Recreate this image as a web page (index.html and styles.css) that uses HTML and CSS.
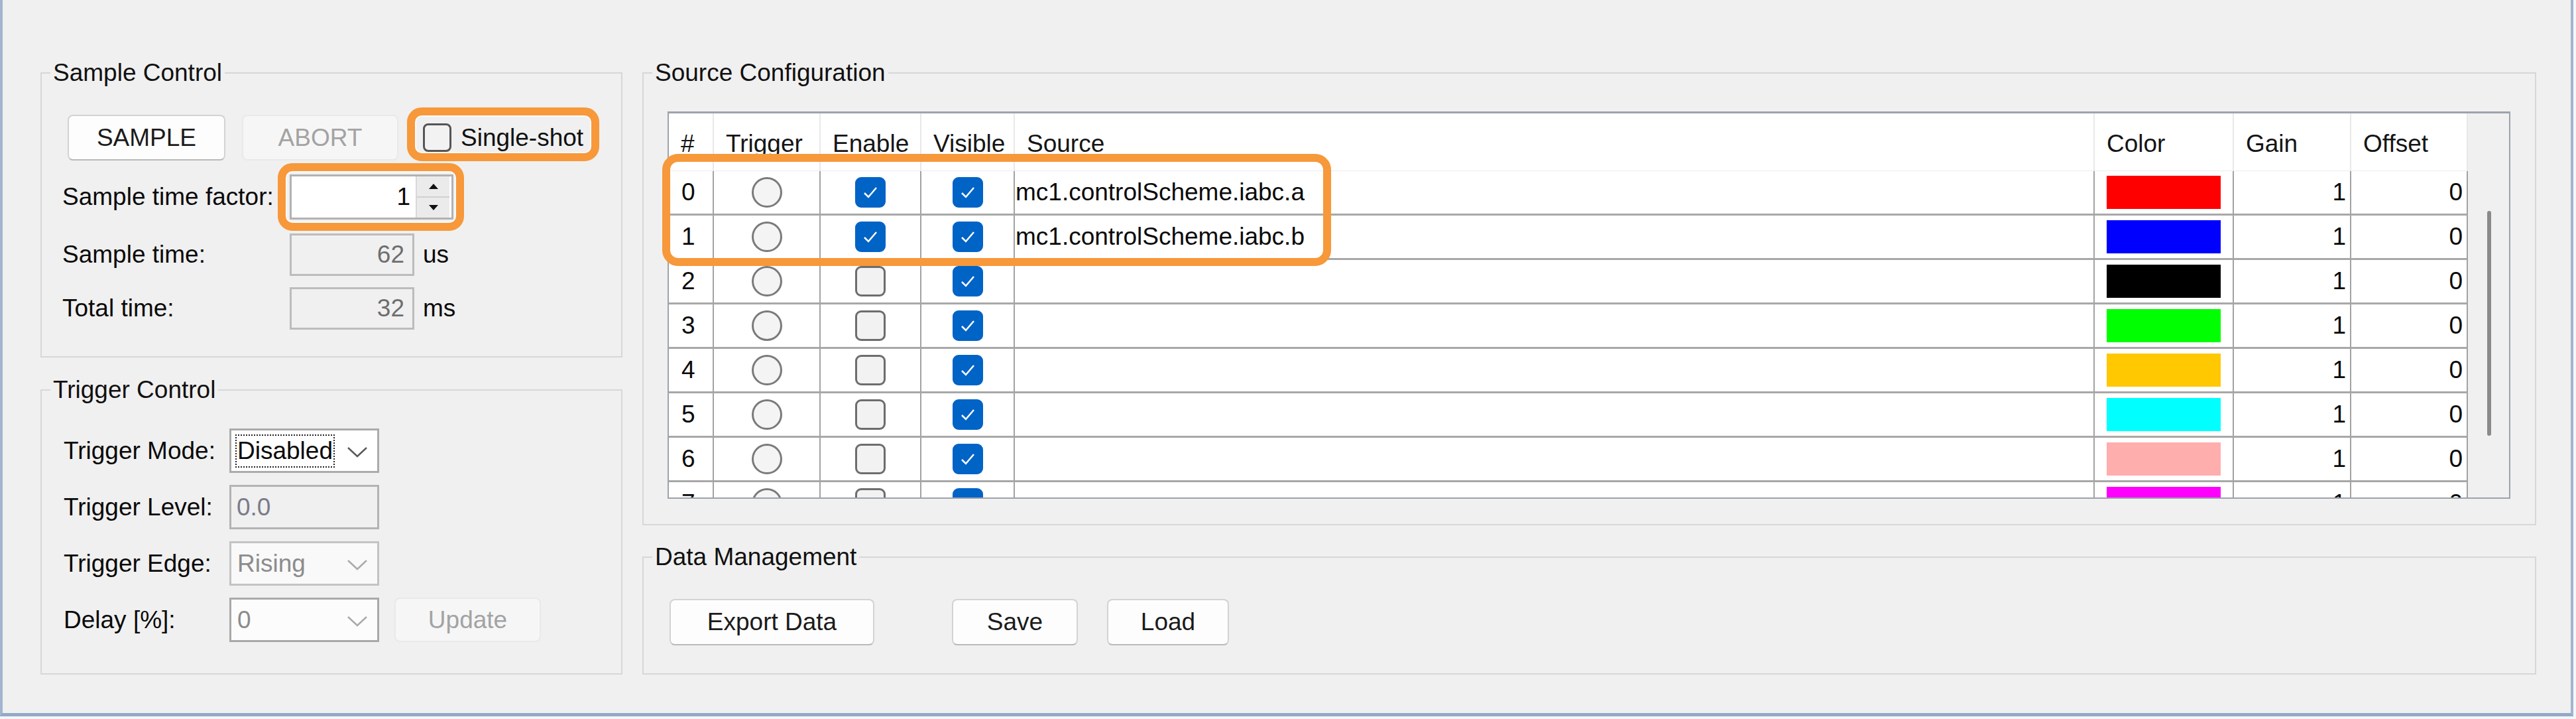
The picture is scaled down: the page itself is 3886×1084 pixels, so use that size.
FILE: index.html
```html
<!DOCTYPE html>
<html>
<head>
<meta charset="utf-8">
<title>Sampler</title>
<link rel="stylesheet" href="styles.css">
</head>
<body>
<div class="window">
  <div class="col-left">
    <fieldset class="group">
      <legend>Sample Control</legend>
      <div class="sample-body">
        <div class="btn-row">
          <button class="btn btn-sample">SAMPLE</button>
          <button class="btn btn-off btn-abort">ABORT</button>
          <label class="check-label hl hl-single"><span class="cbox"></span><span>Single-shot</span></label>
        </div>
        <div class="form-row row-factor">
          <span class="lbl">Sample time factor:</span>
          <div class="spin hl hl-spin">
            <span class="spin-val">1</span>
            <span class="spin-btns"><span class="half"><span class="arr up"></span></span><span class="half"><span class="arr down"></span></span></span>
          </div>
        </div>
        <div class="form-row row-st"><span class="lbl">Sample time:</span><span class="ro">62</span><span class="unit">us</span></div>
        <div class="form-row row-tt"><span class="lbl">Total time:</span><span class="ro">32</span><span class="unit">ms</span></div>
      </div>
    </fieldset>
    <fieldset class="group">
      <legend>Trigger Control</legend>
      <div class="trigger-body">
        <div class="trow">
          <span class="tlbl">Trigger Mode:</span>
          <div class="combo"><span class="focus">Disabled</span><svg class="chev" width="32" height="17" viewBox="0 0 32 17"><polyline points="2,2 16,15 30,2" fill="none" stroke="#5a5a5a" stroke-width="2.5"/></svg></div>
        </div>
        <div class="trow">
          <span class="tlbl">Trigger Level:</span>
          <div class="tfield">0.0</div>
        </div>
        <div class="trow">
          <span class="tlbl">Trigger Edge:</span>
          <div class="combo combo-off"><span class="cval">Rising</span><svg class="chev" width="32" height="17" viewBox="0 0 32 17"><polyline points="2,2 16,15 30,2" fill="none" stroke="#aaaaaa" stroke-width="2.5"/></svg></div>
        </div>
        <div class="trow">
          <span class="tlbl">Delay [%]:</span>
          <div class="combo combo-delay"><span class="cval">0</span><svg class="chev" width="32" height="17" viewBox="0 0 32 17"><polyline points="2,2 16,15 30,2" fill="none" stroke="#aaaaaa" stroke-width="2.5"/></svg></div>
          <button class="btn btn-off btn-update">Update</button>
        </div>
      </div>
    </fieldset>
  </div>
  <div class="col-right">
    <fieldset class="group">
      <legend>Source Configuration</legend>
      <div class="source-body">
        <div class="tframe">
          <div class="tgrid">
            <div class="th">#</div><div class="th">Trigger</div><div class="th">Enable</div><div class="th">Visible</div><div class="th">Source</div><div class="th">Color</div><div class="th">Gain</div><div class="th">Offset</div>

            <div class="td c-num">0</div><div class="td c-mid"><span class="radio"></span></div><div class="td c-mid"><span class="cb on"><svg width="40" height="40" viewBox="0 0 40 40"><polyline points="11,21 17,27 29,13" fill="none" stroke="#ffffff" stroke-width="2.5"/></svg></span></div><div class="td c-mid"><span class="cb on"><svg width="40" height="40" viewBox="0 0 40 40"><polyline points="11,21 17,27 29,13" fill="none" stroke="#ffffff" stroke-width="2.5"/></svg></span></div><div class="td c-src">mc1.controlScheme.iabc.a</div><div class="td c-color"><span class="sw sw-red"></span></div><div class="td c-val">1</div><div class="td c-val">0</div>

            <div class="td c-num">1</div><div class="td c-mid"><span class="radio"></span></div><div class="td c-mid"><span class="cb on"><svg width="40" height="40" viewBox="0 0 40 40"><polyline points="11,21 17,27 29,13" fill="none" stroke="#ffffff" stroke-width="2.5"/></svg></span></div><div class="td c-mid"><span class="cb on"><svg width="40" height="40" viewBox="0 0 40 40"><polyline points="11,21 17,27 29,13" fill="none" stroke="#ffffff" stroke-width="2.5"/></svg></span></div><div class="td c-src">mc1.controlScheme.iabc.b</div><div class="td c-color"><span class="sw sw-blue"></span></div><div class="td c-val">1</div><div class="td c-val">0</div>

            <div class="td c-num">2</div><div class="td c-mid"><span class="radio"></span></div><div class="td c-mid"><span class="cb"></span></div><div class="td c-mid"><span class="cb on"><svg width="40" height="40" viewBox="0 0 40 40"><polyline points="11,21 17,27 29,13" fill="none" stroke="#ffffff" stroke-width="2.5"/></svg></span></div><div class="td c-src"></div><div class="td c-color"><span class="sw sw-black"></span></div><div class="td c-val">1</div><div class="td c-val">0</div>

            <div class="td c-num">3</div><div class="td c-mid"><span class="radio"></span></div><div class="td c-mid"><span class="cb"></span></div><div class="td c-mid"><span class="cb on"><svg width="40" height="40" viewBox="0 0 40 40"><polyline points="11,21 17,27 29,13" fill="none" stroke="#ffffff" stroke-width="2.5"/></svg></span></div><div class="td c-src"></div><div class="td c-color"><span class="sw sw-green"></span></div><div class="td c-val">1</div><div class="td c-val">0</div>

            <div class="td c-num">4</div><div class="td c-mid"><span class="radio"></span></div><div class="td c-mid"><span class="cb"></span></div><div class="td c-mid"><span class="cb on"><svg width="40" height="40" viewBox="0 0 40 40"><polyline points="11,21 17,27 29,13" fill="none" stroke="#ffffff" stroke-width="2.5"/></svg></span></div><div class="td c-src"></div><div class="td c-color"><span class="sw sw-gold"></span></div><div class="td c-val">1</div><div class="td c-val">0</div>

            <div class="td c-num">5</div><div class="td c-mid"><span class="radio"></span></div><div class="td c-mid"><span class="cb"></span></div><div class="td c-mid"><span class="cb on"><svg width="40" height="40" viewBox="0 0 40 40"><polyline points="11,21 17,27 29,13" fill="none" stroke="#ffffff" stroke-width="2.5"/></svg></span></div><div class="td c-src"></div><div class="td c-color"><span class="sw sw-cyan"></span></div><div class="td c-val">1</div><div class="td c-val">0</div>

            <div class="td c-num">6</div><div class="td c-mid"><span class="radio"></span></div><div class="td c-mid"><span class="cb"></span></div><div class="td c-mid"><span class="cb on"><svg width="40" height="40" viewBox="0 0 40 40"><polyline points="11,21 17,27 29,13" fill="none" stroke="#ffffff" stroke-width="2.5"/></svg></span></div><div class="td c-src"></div><div class="td c-color"><span class="sw sw-pink"></span></div><div class="td c-val">1</div><div class="td c-val">0</div>

            <div class="td c-num">7</div><div class="td c-mid"><span class="radio"></span></div><div class="td c-mid"><span class="cb"></span></div><div class="td c-mid"><span class="cb on"><svg width="40" height="40" viewBox="0 0 40 40"><polyline points="11,21 17,27 29,13" fill="none" stroke="#ffffff" stroke-width="2.5"/></svg></span></div><div class="td c-src"></div><div class="td c-color"><span class="sw sw-magenta"></span></div><div class="td c-val">1</div><div class="td c-val">0</div>
          </div>
          <div class="vscroll"><div class="thumb"></div></div>
          <div class="hl-rows"></div>
        </div>
      </div>
    </fieldset>
    <fieldset class="group">
      <legend>Data Management</legend>
      <div class="data-body">
        <button class="btn btn-export">Export Data</button>
        <button class="btn btn-save">Save</button>
        <button class="btn btn-load">Load</button>
      </div>
    </fieldset>
  </div>
</div>
</body>
</html>
```

FILE: styles.css
```css
* { box-sizing: border-box; }
html, body { margin: 0; padding: 0; background: #f4f6f9; }
body {
  font-family: "Liberation Sans", Arial, sans-serif;
  font-size: 37px;
  color: #0a0a0a;
}

.window {
  width: 3882px;
  height: 1080px;
  background: #f0f0f0;
  border-left: 4px solid #a3b5cf;
  border-right: 4px solid #a3b5cf;
  border-bottom: 5px solid #93a9c6;
  padding: 88px 52px 0 57px;
  display: flex;
  gap: 30px;
}

.col-left { width: 878px; display: flex; flex-direction: column; gap: 27px; }
.col-right { flex: 1; min-width: 0; display: flex; flex-direction: column; gap: 26px; }

fieldset.group {
  margin: 0;
  padding: 0;
  min-width: 0;
  border: 2px solid #d7d7d7;
}
.group legend {
  margin-left: 13px;
  padding: 0 4px;
  height: 44px;
  line-height: 44px;
  color: #111;
}

/* buttons */
.btn {
  font: inherit;
  color: #1b1b1b;
  background: #fdfdfd;
  border: 2px solid #d3d3d3;
  border-bottom-color: #b9b9b9;
  border-radius: 8px;
  padding: 0;
  height: 69px;
}
.btn-off {
  background: #f6f6f6;
  border-color: #e9e9e9;
  color: #a3a3a3;
}

/* sample control */
.sample-body { padding: 41px 0 40px 31px; }
.btn-row { display: flex; align-items: center; height: 69px; margin-left: 8px; }
.btn-sample { width: 238px; }
.btn-abort { width: 236px; margin-left: 25px; }
.check-label {
  display: flex;
  align-items: center;
  gap: 14px;
  height: 69px;
  width: 246px;
  margin-left: 37px;
  color: #111;
}
.cbox {
  width: 43px;
  height: 43px;
  border: 3px solid #555;
  border-radius: 8px;
  background: #f2f2f2;
  flex: none;
}

.form-row { display: flex; align-items: center; }
.row-factor { margin-top: 21px; height: 68px; }
.row-st { margin-top: 21px; height: 64px; }
.row-tt { margin-top: 17px; height: 64px; }
.lbl { width: 343px; flex: none; white-space: nowrap; }

.spin {
  width: 247px;
  height: 68px;
  border: 3px solid #b2b2b2;
  background: #fff;
  display: flex;
}
.spin-val {
  flex: 1;
  text-align: right;
  padding-right: 8px;
  line-height: 62px;
}
.spin-btns {
  width: 51px;
  margin: 0 3px 0 0;
  background: #ebebeb;
  border-left: 2px solid #d8d8d8;
  display: flex;
  flex-direction: column;
}
.half { flex: 1; display: flex; align-items: center; justify-content: center; }
.half + .half { border-top: 2px solid #d0d0d0; }
.arr { width: 0; height: 0; border-left: 7px solid transparent; border-right: 7px solid transparent; }
.arr.up { border-bottom: 8px solid #111; }
.arr.down { border-top: 8px solid #111; }

.ro {
  width: 188px;
  height: 64px;
  border: 3px solid #bcbcbc;
  background: #f0f0f0;
  color: #6e6e6e;
  display: flex;
  align-items: center;
  justify-content: flex-end;
  padding-right: 12px;
}
.unit { margin-left: 13px; }

/* highlight annotations */
.hl { position: relative; }
.hl::after {
  content: "";
  position: absolute;
  border: 12px solid #f7983a;
  border-radius: 22px;
  box-shadow: inset 0 0 0 2px #fafafa;
  pointer-events: none;
}
.hl-single::after { left: -24px; right: -20px; top: -11px; bottom: -1px; }
.hl-spin::after { left: -21px; right: -19px; top: -20px; bottom: -20px; }
.hl-rows {
  position: absolute;
  left: -10px;
  top: 61px;
  width: 1009px;
  height: 169px;
  border: 12px solid #f7983a;
  border-radius: 24px;
  pointer-events: none;
}

/* trigger control */
.trigger-body { padding: 36px 0 47px 33px; }
.trow { display: flex; align-items: center; height: 67px; }
.trow + .trow { margin-top: 18px; }
.tlbl { width: 250px; flex: none; white-space: nowrap; }
.combo {
  width: 226px;
  height: 67px;
  border: 3px solid #ababab;
  background: #fff;
  display: flex;
  align-items: center;
  justify-content: space-between;
  padding: 0 14px 0 6px;
}
.focus {
  border: 2px dotted #222;
  line-height: 46px;
  padding: 0 1px;
}
.chev { flex: none; margin-top: 4px; }
.combo-off { background: #f9f9f9; border-color: #c3c3c3; }
.combo-delay { background: #fcfcfc; border-color: #a9a9a9; }
.cval { color: #8c8c8c; padding-left: 3px; }
.tfield {
  width: 226px;
  height: 67px;
  border: 3px solid #b3b3b3;
  background: #f0f0f0;
  color: #7b7b8a;
  display: flex;
  align-items: center;
  padding-left: 8px;
}
.btn-update { width: 221px; height: 67px; margin-left: 23px; }

/* source configuration */
.source-body { padding: 36px 37px 38px 36px; }
.tframe {
  position: relative;
  height: 584px;
  border: 2px solid #9ca3ad;
  border-top-width: 3px;
  background: #fff;
  display: flex;
}
.tgrid {
  flex: none;
  width: 2714px;
  overflow: hidden;
  display: grid;
  grid-template-columns: 68px 161px 152px 141px 1629px 210px 177px 176px;
  grid-template-rows: 87px;
  grid-auto-rows: 67px;
  align-content: start;
}
.th {
  background: #fff;
  border-right: 2px solid #e8e8e8;
  border-bottom: 1px solid #ececec;
  display: flex;
  align-items: center;
  padding: 6px 0 0 18px;
  color: #151515;
}
.td {
  background: #fff;
  border-right: 2px solid #a2a2a2;
  border-bottom: 3px solid #a8a8a8;
  display: flex;
  align-items: center;
}
.c-num { padding-left: 19px; }
.c-mid { justify-content: center; }
.c-src { padding-left: 1px; white-space: nowrap; }
.c-color { padding-left: 18px; }
.c-val { justify-content: flex-end; padding-right: 6px; }

.radio {
  width: 46px;
  height: 46px;
  border-radius: 50%;
  border: 3px solid #7a7a7a;
  background: #f4f4f4;
}
.cb {
  width: 46px;
  height: 46px;
  border-radius: 9px;
  border: 3px solid #6d6d6d;
  background: #f2f2f2;
  display: block;
}
.cb.on { background: #0063c6; border-color: #0063c6; }
.cb svg { display: block; }

.sw { width: 172px; height: 50px; display: block; }
.sw-red { background: #ff0000; }
.sw-blue { background: #0000ff; }
.sw-black { background: #000000; }
.sw-green { background: #00ff00; }
.sw-gold { background: #ffc800; }
.sw-cyan { background: #00ffff; }
.sw-pink { background: #ffaeae; }
.sw-magenta { background: #ff00ff; }

.vscroll {
  flex: 1;
  background: #f0f0f0;
  padding: 147px 0 0 29px;
}
.thumb {
  width: 6px;
  height: 339px;
  border-radius: 3px;
  background: #8a8a8a;
}

/* data management */
.data-body { padding: 41px 0 42px 39px; display: flex; }
.data-body .btn { height: 70px; }
.btn-export { width: 309px; }
.btn-save { width: 190px; margin-left: 117px; }
.btn-load { width: 184px; margin-left: 44px; }
```
